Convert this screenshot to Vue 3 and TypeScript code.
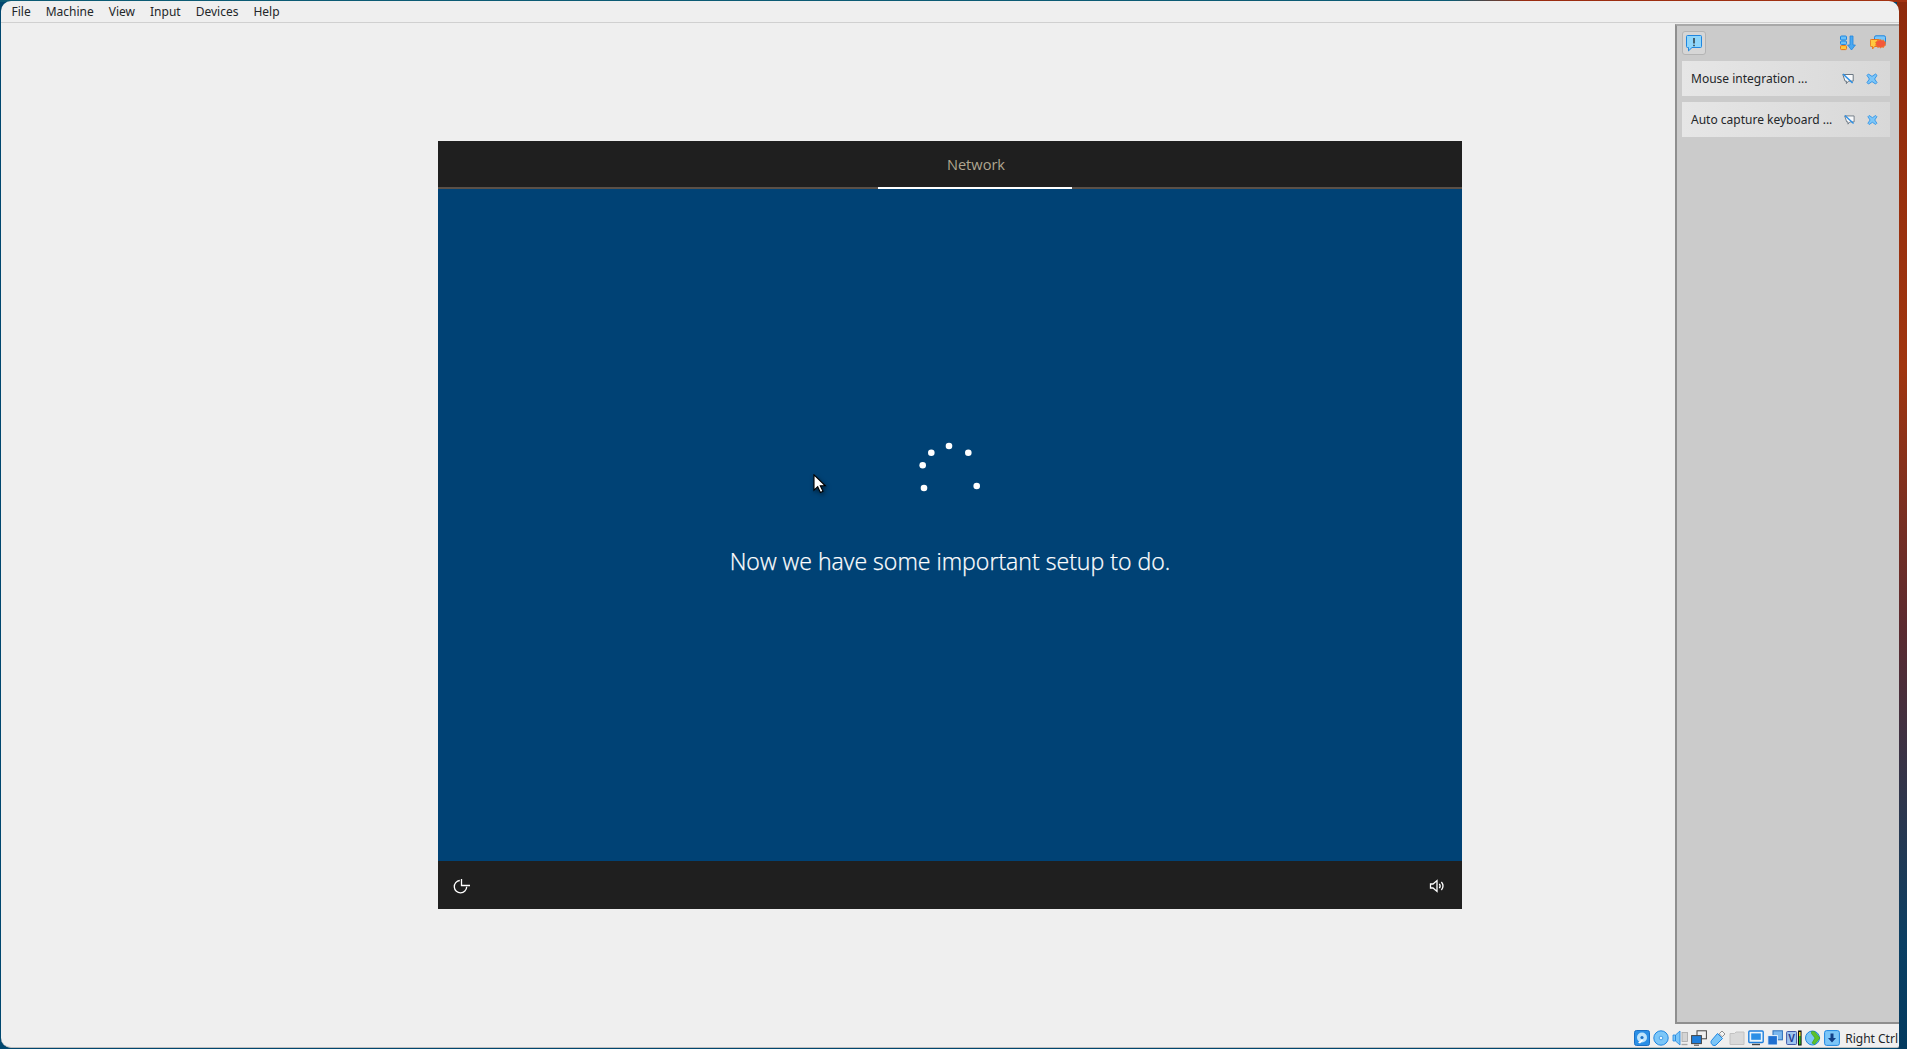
<template>
  <div class="desktop">
    <div class="window">
      <nav class="menubar">
        <span v-for="item in menus" :key="item" class="menu-item">{{ item }}</span>
      </nav>

      <main class="viewport">
        <section class="guest">
          <header class="guest-head">
            <span class="step">Network</span>
            <div class="progress"><div class="progress-on"></div></div>
          </header>

          <div class="guest-body">
            <svg class="spinner" width="60" height="50" viewBox="0 0 60 50">
              <circle v-for="(dot, i) in dots" :key="i" :cx="dot[0]" :cy="dot[1]" r="3.3" fill="#fff" />
            </svg>
            <p class="message">Now we have some important setup to do.</p>
            <svg class="cursor" width="14" height="20" viewBox="0 0 14 20">
              <path d="M1 .8v15.4l3.7-3.5 2.7 5.8 2.6-1.2-2.7-5.5h5z" fill="#fff" stroke="#000" stroke-width="1.1" />
            </svg>
          </div>

          <footer class="guest-foot">
            <svg width="18" height="18" viewBox="0 0 18 18" fill="none" stroke="#fff" stroke-width="1.3">
              <path d="M7.8 4.5A6.2 6.2 0 1 0 14.7 10.8" />
              <path d="M9.5 3v6.5H18" />
            </svg>
            <svg class="foot-icon" width="16" height="16" viewBox="0 0 16 16" fill="none" stroke="#fff" stroke-width="1.3">
              <path d="M1.5 6v4h2.5l4 3.4V2.6L4 6z" />
              <path d="M10.3 5.8a3.6 3.6 0 0 1 0 4.4" />
              <path d="M12.4 4a6.4 6.4 0 0 1 0 8" />
            </svg>
          </footer>
        </section>

        <aside class="notify">
          <div class="notify-top">
            <span class="notify-btn">
              <svg width="18" height="18" viewBox="0 0 18 18">
                <path d="M2.5 1.5h13a1 1 0 0 1 1 1v10a1 1 0 0 1-1 1H7l-3.5 3.4v-3.4h-1a1 1 0 0 1-1-1v-10a1 1 0 0 1 1-1z" fill="#8fd6fb" stroke="#1f86e0" />
                <path d="M9 4v5.5M9 10.8v1.4" stroke="#111" stroke-width="1.2" />
              </svg>
            </span>
            <div class="notify-tools">
              <svg width="16" height="16" viewBox="0 0 16 16">
                <rect x="0.5" y="1" width="6" height="4" rx="1" fill="#6cc0f7" stroke="#1f86e0" />
                <rect x="0.5" y="6" width="6" height="3.6" rx="1" fill="#6cc0f7" stroke="#1f86e0" />
                <rect x="0.5" y="10.6" width="6" height="4" rx="1" fill="#ffc83d" stroke="#e8751a" />
                <path d="M10 1h3v9h2.4L11.5 15 7.6 10H10z" fill="#4aa8f0" stroke="#1f86e0" stroke-width=".8" />
              </svg>
              <svg width="16" height="16" viewBox="0 0 16 16">
                <rect x="4.5" y=".8" width="11" height="9" rx="1.5" fill="#7cc6f8" stroke="#1f86e0" />
                <path d="M1.3 4.5h7.5a1 1 0 0 1 1 1v5a1 1 0 0 1-1 1H4.6l-2 2.4v-2.4H1.3a1 1 0 0 1-1-1v-5a1 1 0 0 1 1-1z" fill="#ffc93f" stroke="#e8751a" />
                <path d="M10.6 4.5l1.3 1 1.6-.6.6 1.5 1.5.7-.5 1.6.5 1.6-1.5.7-.6 1.5-1.6-.6-1.3 1-1.3-1-1.6.6-.6-1.5-1.5-.7.5-1.6-.5-1.6 1.5-.7.6-1.5 1.6.6z" fill="#f4583a" stroke="#ee7a20" stroke-width=".7" />
              </svg>
            </div>
          </div>

          <div v-for="note in notes" :key="note" class="note">
            <span class="note-text">{{ note }}</span>
            <svg class="note-bubble" width="12" height="12" viewBox="0 0 12 12">
              <path d="M.8 1.5h10.4v6.6H6.5L4.4 10.6V8.1H3z" fill="#f7f8fa" stroke="#6b7782" />
              <path d="M1 1l9.6 9" stroke="#2a8fe6" stroke-width="1.5" />
            </svg>
            <svg class="note-close" width="12" height="12" viewBox="0 0 12 12">
              <path d="M2.4 1L6 3.4 9.6 1 11 2.4 8.6 6 11 9.6 9.6 11 6 8.6 2.4 11 1 9.6 3.4 6 1 2.4z" fill="#7cc6f8" stroke="#2a8fe6" stroke-width=".9" />
            </svg>
          </div>
        </aside>
      </main>

      <footer class="statusbar">
        <!-- hard disk -->
        <svg width="16" height="16" viewBox="0 0 16 16">
          <rect x=".5" y=".5" width="15" height="15" rx="2" fill="#2a8fe6" stroke="#1a6fc4" />
          <circle cx="8" cy="7.5" r="5" fill="#bfe4fb" />
          <circle cx="8" cy="7.5" r="1.6" fill="#1a6fc4" />
          <path d="M4 12.5l4-3 1 1-3 3z" fill="#fff" />
        </svg>
        <!-- optical -->
        <svg width="16" height="16" viewBox="0 0 16 16">
          <circle cx="8" cy="8" r="7.2" fill="#7cc6f8" stroke="#1f86e0" />
          <circle cx="8" cy="8" r="1.8" fill="#e8f6ff" stroke="#1f86e0" stroke-width=".7" />
        </svg>
        <!-- audio -->
        <svg width="16" height="16" viewBox="0 0 16 16">
          <path d="M1 5h2.5v6H1z" fill="#7cc6f8" stroke="#1f86e0" stroke-width=".8" />
          <path d="M3.5 5L8 1v14l-4.5-4z" fill="#7cc6f8" stroke="#1f86e0" stroke-width=".8" />
          <rect x="10" y="2.5" width="5.5" height="9" fill="#d4d4d4" stroke="#a8a8a8" stroke-width=".8" />
          <path d="M9.5 14.5h6" stroke="#a8a8a8" stroke-width="1.4" />
        </svg>
        <!-- network -->
        <svg width="16" height="16" viewBox="0 0 16 16">
          <rect x="6" y=".8" width="9.4" height="8" fill="#f0f0f0" stroke="#444" />
          <rect x=".6" y="5.6" width="9.8" height="8" fill="#1f7fdc" stroke="#444" />
          <path d="M3 15.2h5" stroke="#444" />
        </svg>
        <!-- usb -->
        <svg width="16" height="16" viewBox="0 0 16 16">
          <path d="M7.5 3.5l5 5L6 15c-1.2.9-3 .6-4-.5s-1.4-2.8-.5-4z" fill="#7cc6f8" stroke="#1f86e0" />
          <path d="M9.2 3.8L12 1l3 3-2.8 2.8z" fill="#f4f4f4" stroke="#777" stroke-width=".8" />
        </svg>
        <!-- shared folders, greyed out -->
        <svg width="16" height="16" viewBox="0 0 16 16">
          <path d="M1 3.5h4.5l1.5-1.5h8v12.5H1z" fill="#d9d9d9" stroke="#c2c2c2" />
        </svg>
        <!-- display -->
        <svg width="16" height="16" viewBox="0 0 16 16">
          <rect x=".8" y="1" width="14.4" height="11.5" rx="1" fill="#e8f4fc" stroke="#1f7fdc" stroke-width="1.4" />
          <rect x="3.2" y="3.4" width="9.6" height="6.4" fill="#2a8fe6" />
          <path d="M4 14.5h8" stroke="#444" stroke-width="1.4" />
        </svg>
        <!-- capture -->
        <svg width="16" height="16" viewBox="0 0 16 16">
          <rect x="6" y=".8" width="9.4" height="9" fill="#7cb8ee" stroke="#2a6fbc" />
          <rect x=".8" y="5.6" width="9.6" height="9.4" fill="#1f6fd0" stroke="#e8f4fc" />
        </svg>
        <!-- recording / activity -->
        <svg width="16" height="16" viewBox="0 0 16 16">
          <rect x=".6" y="1.5" width="10" height="13" rx="1" fill="#9ec4f0" stroke="#4058a8" />
          <rect x="12" y=".5" width="3.6" height="15" fill="#111" />
          <rect x="13" y="2" width="1.6" height="4" fill="#f0d020" />
          <rect x="13" y="6" width="1.6" height="8.5" fill="#2cc020" />
          <text x="5.6" y="12" class="v-mark">V</text>
        </svg>
        <!-- globe -->
        <svg width="16" height="16" viewBox="0 0 16 16">
          <circle cx="7.5" cy="8" r="7" fill="#7cc6f8" stroke="#1f86e0" />
          <path d="M6.5 1.5l3 0 5.5 6.5-5.5 6.5-2.5-1.5 3-5-3.5-4.5z" fill="#5cc22c" stroke="#3a9a18" stroke-width=".6" />
        </svg>
        <!-- guest additions -->
        <svg width="16" height="16" viewBox="0 0 16 16">
          <rect x=".6" y=".6" width="14.8" height="14.8" rx="2" fill="#7cc6f8" stroke="#1f86e0" />
          <path d="M6.5 3.5h3V8h2.5L8 12.5 4 8h2.5z" fill="#123e86" />
        </svg>
        <span class="hostkey">Right Ctrl</span>
      </footer>
    </div>
  </div>
</template>

<script setup lang="ts">
const menus: string[] = ['File', 'Machine', 'View', 'Input', 'Devices', 'Help'];

const notes: string[] = ['Mouse integration ...', 'Auto capture keyboard ...'];

// spinner frame, positions inside the svg box
const dots: [number, number][] = [
  [29, 6],
  [11.3, 12.7],
  [48.3, 12.7],
  [2.7, 25.3],
  [4, 48],
  [56.7, 46],
];
</script>

<style>
html,
body {
  margin: 0;
  height: 100%;
  overflow: hidden;
}
</style>

<style scoped>
.desktop {
  width: 1907px;
  height: 1049px;
  padding: 1px 8px 1px 1px;
  box-sizing: border-box;
  background:
    linear-gradient(90deg, #0c5b74 0, #0c5b74 76%, #9a2c10 80%, #a33312 100%) top / 100% 2px no-repeat,
    linear-gradient(180deg, #8e2a0c 0, #a0350f 35%, #5a2a30 60%, #0a3f63 90%, #033a5f 100%) right / 10px 100% no-repeat,
    #00476f;
  font-family: "Noto Sans", sans-serif;
}

.window {
  height: 100%;
  display: flex;
  flex-direction: column;
  background: #efefef;
  border-radius: 10px 10px 2px 10px;
  border-bottom: 1px solid #bdbdbd;
  box-sizing: border-box;
  overflow: hidden;
}

.menubar {
  flex: 0 0 22px;
  box-sizing: border-box;
  display: flex;
  align-items: center;
  padding-left: 3px;
  border-bottom: 1px solid #d0d0d0;
}

.menu-item {
  padding: 0 7.5px;
  font-size: 12px;
  line-height: 20px;
  color: #232629;
}

.viewport {
  flex: 1;
  position: relative;
  display: flex;
  align-items: center;
  justify-content: center;
  min-height: 0;
}

.guest {
  width: 1024px;
  height: 768px;
  display: flex;
  flex-direction: column;
  background: #004275;
  font-family: "Open Sans", sans-serif;
}

.guest-head {
  flex: 0 0 48px;
  display: flex;
  flex-direction: column;
  background: #1f1f1f;
}

.step {
  flex: 1;
  display: flex;
  align-items: center;
  justify-content: center;
  padding-left: 52px;
  font-size: 14.6px;
  color: #b0a690;
}

.progress {
  height: 2px;
  display: flex;
  justify-content: center;
  padding-left: 50px;
  background: #5a5048;
}

.progress-on {
  width: 194px;
  background: #fff;
}

.guest-body {
  flex: 1;
  position: relative;
  display: flex;
  flex-direction: column;
  align-items: center;
  padding-top: 251px;
}

.spinner {
  display: block;
  overflow: visible;
}

.message {
  margin: 55px 0 0;
  font-size: 23.1px;
  font-weight: 300;
  -webkit-text-stroke: 0.25px #fff;
  line-height: 32px;
  color: #fff;
}

.cursor {
  position: absolute;
  left: 375px;
  top: 285px;
  filter: drop-shadow(1px 2px 2px rgba(0, 0, 0, 0.5));
}

.guest-foot {
  flex: 0 0 48px;
  display: flex;
  align-items: center;
  justify-content: space-between;
  padding: 0 17px 0 14px;
  background: #1f1f1f;
}

.foot-icon {
  margin-top: 2px;
}

.notify {
  position: absolute;
  top: 1px;
  right: 0;
  bottom: 3px;
  width: 224px;
  padding: 5px 9px 0 5px;
  box-sizing: border-box;
  background: #cbcbcb;
  border-top: 2px solid #a9a9a9;
  border-left: 2px solid #8f8f8f;
  border-bottom: 2px solid #8f8f8f;
}

.notify-top {
  display: flex;
  align-items: center;
  justify-content: space-between;
  height: 24px;
  margin-bottom: 6px;
}

.notify-btn {
  width: 22px;
  height: 22px;
  display: flex;
  align-items: center;
  justify-content: center;
  border: 1px solid #b4b4b4;
  border-radius: 3px;
  background: #d6d6d6;
}

.notify-tools {
  display: flex;
  gap: 14px;
  margin-right: 4px;
}

.note {
  height: 35px;
  display: flex;
  align-items: center;
  gap: 12px;
  padding: 0 12px 0 9px;
  margin-bottom: 6px;
  background: linear-gradient(90deg, #e6e6e6, #d8d8d8);
}

.note-text {
  flex: 1;
  font-size: 12px;
  white-space: nowrap;
  color: #232629;
}

.statusbar {
  flex: 0 0 20px;
  box-sizing: border-box;
  display: flex;
  align-items: center;
  justify-content: flex-end;
  gap: 3px;
  padding: 2px 1px 0 0;
  overflow: hidden;
}

.statusbar svg {
  flex: none;
}

.v-mark {
  font-family: "Liberation Sans", sans-serif;
  font-size: 10px;
  font-weight: 700;
  fill: #1c3a90;
  text-anchor: middle;
}

.hostkey {
  margin-left: 2px;
  font-size: 12px;
  white-space: nowrap;
  color: #232629;
}
</style>
